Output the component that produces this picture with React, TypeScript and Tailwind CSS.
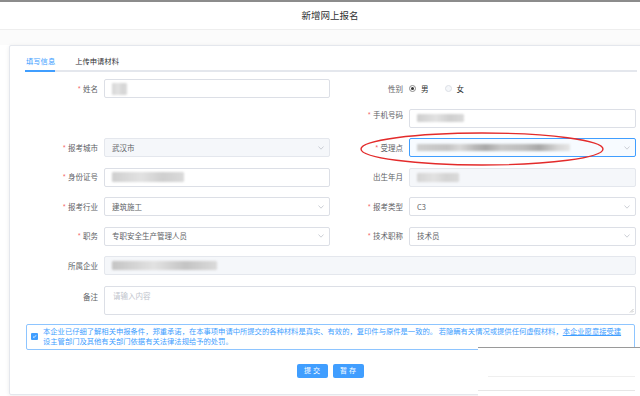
import type { ReactNode } from "react";

const Chevron = () => (
  <svg width="6" height="4" viewBox="0 0 6 4" className="shrink-0">
    <polyline points="0.5,0.5 3,3.2 5.5,0.5" fill="none" stroke="#c0c4cc" strokeWidth="0.8" />
  </svg>
);

function Label({ text, required }: { text: string; required?: boolean }) {
  return (
    <div className="flex items-center justify-end pr-[6px] text-[7.5px] text-[#606266]">
      {required && <span className="mr-[2px] text-[#f56c6c]">*</span>}
      {text}
    </div>
  );
}

function Field({
  children,
  disabled,
  focused,
  select,
  className = "",
}: {
  children?: ReactNode;
  disabled?: boolean;
  focused?: boolean;
  select?: boolean;
  className?: string;
}) {
  const tone = focused
    ? "border-[#409eff] bg-[#f7fbff]"
    : disabled
      ? "border-[#e4e7ed] bg-[#f5f7fa]"
      : "border-[#dcdfe6] bg-white";
  return (
    <div
      className={`flex h-[19px] items-center justify-between rounded-[2px] border pl-[7px] pr-[5px] text-[7.5px] text-[#606266] ${tone} ${className}`}
    >
      <div className="flex items-center">{children}</div>
      {select && <Chevron />}
    </div>
  );
}

// pixelated/blurred personal data in the screenshot
function Blur({ w, h, c = "#cfcfcf" }: { w: number; h: number; c?: string }) {
  return (
    <div
      className="rounded-[1px] blur-[1px]"
      style={{ width: w, height: h, background: `linear-gradient(90deg, ${c}, #e2e2e2 40%, ${c} 70%, #dadada)` }}
    />
  );
}

export default function App() {
  return (
    <div className="relative h-[396px] w-[640px] overflow-hidden bg-white font-['Noto_Sans_CJK_SC','Noto_Sans',sans-serif]">
      {/* header */}
      <div className="flex h-[30px] items-center justify-center border-t-2 border-b border-t-[#8c8c8c] border-b-[#eeeeee] pl-[20px] text-[9.5px] text-[#303133]">
        新增网上报名
      </div>
      <div className="h-[15px] bg-[#fbfbfb]" />

      {/* card */}
      <div className="ml-[9px] h-[350px] w-[642px] rounded-[2px] border border-[#e4e7ed] bg-white shadow-[0_1px_4px_rgba(0,0,0,0.08)]">
        <div className="ml-[15px] mr-[13px] flex h-[26px] gap-[20px] border-b-2 border-[#e4e7ed] text-[7.3px]">
          <div className="relative flex items-center pl-[1px] pt-[6px] text-[#409eff]">
            填写信息
            <div className="absolute -bottom-[2px] left-0 right-0 h-[2px] bg-[#409eff]" />
          </div>
          <div className="flex items-center pt-[6px] text-[#303133]">上传申请材料</div>
        </div>

        <div className="ml-[15px] mt-[7px] grid grid-cols-[79px_226px_79px_227px] gap-y-[10.5px]">
          <Label text="姓名" required />
          <Field>
            <Blur w={15} h={12} c="#d6d6d6" />
          </Field>
          <Label text="性别" />
          <div className="flex h-[19px] items-center text-[7.5px] text-[#303133]">
            <div className="flex h-[7px] w-[7px] items-center justify-center rounded-full border border-[#8a8a8a] bg-white">
              <div className="h-[3px] w-[3px] rounded-full bg-[#333333]" />
            </div>
            <span className="ml-[5px]">男</span>
            <div className="ml-[16px] h-[7px] w-[7px] rounded-full border border-[#dcdfe6] bg-[#f5f7fa]" />
            <span className="ml-[5px]">女</span>
          </div>

          <div className="col-start-3">
            <Label text="手机号码" required />
          </div>
          <Field>
            <Blur w={47} h={8} />
          </Field>

          <Label text="报考城市" required />
          <Field disabled select>
            武汉市
          </Field>
          <Label text="受理点" required />
          <Field focused select>
            <div
              className="h-[7px] w-[153px] blur-[0.8px]"
              style={{
                background:
                  "linear-gradient(90deg,#cfcfcf 0,#c4c4c4 20%,#d9d9d9 28%,#b8b8b8 38%,#a9a9a9 45%,#c8c8c8 55%,#bdbdbd 70%,#a8a8a8 80%,#d6d6d6 92%,#e6e6e6 100%)",
              }}
            />
          </Field>

          <Label text="身份证号" required />
          <Field>
            <Blur w={72} h={10} />
          </Field>
          <Label text="出生年月" />
          <Field disabled>
            <Blur w={42} h={9} c="#d4d4d4" />
          </Field>

          <Label text="报考行业" required />
          <Field select>建筑施工</Field>
          <Label text="报考类型" required />
          <Field select>C3</Field>

          <Label text="职务" required />
          <Field select>专职安全生产管理人员</Field>
          <Label text="技术职称" required />
          <Field select>技术员</Field>

          <Label text="所属企业" />
          <Field disabled className="col-span-3">
            <Blur w={105} h={9} c="#c4c4c4" />
          </Field>

          <div className="flex items-start justify-end pr-[6px] pt-[5px] text-[7.5px] text-[#606266]">备注</div>
          <div className="relative col-span-3 h-[29px] rounded-[2px] border border-[#dcdfe6] pl-[8px] pt-[3px] text-[7.5px] text-[#c0c4cc]">
            请输入内容
            <svg width="5" height="5" viewBox="0 0 5 5" className="absolute bottom-[1px] right-[1px]">
              <path d="M1 4.5 L4.5 1 M3 4.5 L4.5 3" stroke="#a0a0a0" strokeWidth="0.6" />
            </svg>
          </div>
        </div>

        {/* promise */}
        <div className="ml-[16px] mt-[9px] flex h-[26px] w-[609px] items-center rounded-[2px] border border-[#8ec5ff] pl-[4px] text-[7.3px] leading-[9.5px] text-[#409eff]">
          <div className="flex h-[7px] w-[7px] shrink-0 items-center justify-center rounded-[1px] bg-[#409eff]">
            <svg width="5" height="5" viewBox="0 0 5 5">
              <polyline points="1,2.6 2.1,3.6 4,1.3" fill="none" stroke="white" strokeWidth="0.8" />
            </svg>
          </div>
          <div className="ml-[5px] whitespace-nowrap">
            本企业已仔细了解相关申报条件，郑重承诺，在本事项申请中所提交的各种材料是真实、有效的，复印件与原件是一致的。 若隐瞒有关情况或提供任何虚假材料，
            <span className="underline decoration-[#409eff]">本企业愿意接受建</span>
            <br />
            设主管部门及其他有关部门依据有关法律法规给予的处罚。
          </div>
        </div>

        <div className="mt-[14px] flex justify-center gap-[5px]">
          <button className="h-[14px] w-[31px] rounded-[2px] bg-[#409eff] pl-[2px] text-[7px] tracking-[2px] text-white">
            提交
          </button>
          <button className="h-[14px] w-[31px] rounded-[2px] bg-[#409eff] pl-[2px] text-[7px] tracking-[2px] text-white">
            暂存
          </button>
        </div>
      </div>

      {/* pasted white patch over the bottom right corner */}
      <div className="absolute left-[478px] top-[347px] h-[49px] w-[162px] border-t border-[#9a9a9a] bg-white">
        <div className="mt-[28px] ml-[10px] h-px w-[147px] bg-[#efefef]" />
        <div className="mt-[13px] h-px w-[157px] bg-[#e6e6e6]" />
      </div>

      {/* red annotation ellipse */}
      <svg width="640" height="396" className="pointer-events-none absolute left-0 top-0">
        <ellipse cx="482" cy="149" rx="121" ry="16" fill="none" stroke="#e32b2b" strokeWidth="1.4" />
      </svg>
    </div>
  );
}
